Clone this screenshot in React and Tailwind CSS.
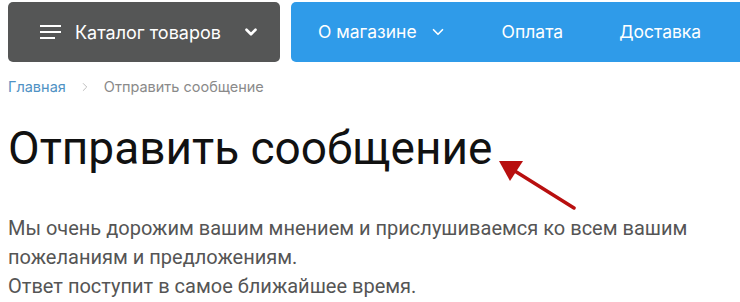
import { ChevronDown, ChevronRight } from 'lucide-react';

function Burger() {
  return (
    <svg width="22" height="16" viewBox="0 0 22 16" className="shrink-0">
      <rect x="0" y="1" width="21" height="2" fill="#fff" />
      <rect x="0" y="7" width="21" height="2" fill="#fff" />
      <rect x="0" y="13" width="15" height="2" fill="#fff" />
    </svg>
  );
}

function Arrow() {
  return (
    <svg
      className="absolute left-[490px] top-[150px] pointer-events-none"
      width="100"
      height="70"
      viewBox="0 0 100 70"
    >
      <line x1="84" y1="58" x2="20" y2="18" stroke="#b80f0f" strokeWidth="3.5" strokeLinecap="round" />
      <polygon points="9,11 33,11 20,31" fill="#b80f0f" />
    </svg>
  );
}

export default function App() {
  return (
    <div className="relative w-[740px] h-[302px] overflow-hidden bg-white font-['Roboto',sans-serif]">
      <nav className="flex gap-[11px] pt-[2px] pl-2">
        <button className="flex items-center w-[272px] h-[60px] rounded-[5px] bg-[#555656] text-white pl-8 pr-5">
          <Burger />
          <span className="ml-[13px] text-[18px] font-['Inter',sans-serif]">Каталог товаров</span>
          <ChevronDown className="ml-auto" size={18} strokeWidth={3.5} />
        </button>
        <div className="flex-1 flex items-center h-[60px] rounded-l-[5px] bg-[#2f9be9] text-white text-[17.5px] font-['Inter',sans-serif] pl-[27px]">
          <span>О магазине</span>
          <ChevronDown className="ml-[12px]" size={18} strokeWidth={2.2} />
          <span className="ml-[55px]">Оплата</span>
          <span className="ml-[56px]">Доставка</span>
        </div>
      </nav>

      <div className="flex items-center mt-[14px] pl-2 text-[14.5px] font-['Inter',sans-serif]">
        <span className="text-[#4f92c4]">Главная</span>
        <ChevronRight className="mx-[12px] text-[#b5b5b5]" size={14} strokeWidth={1.5} />
        <span className="text-[#8a8a8a]">Отправить сообщение</span>
      </div>

      <h1 className="mt-[22px] pl-2 text-[46px] leading-[56px] text-[#111]">Отправить сообщение</h1>

      <div className="mt-[38px] pl-2 text-[20px] leading-[29px] text-[#555]">
        <p>Мы очень дорожим вашим мнением и прислушиваемся ко всем вашим пожеланиям и предложениям.</p>
        <p>Ответ поступит в самое ближайшее время.</p>
      </div>

      <Arrow />
    </div>
  );
}
